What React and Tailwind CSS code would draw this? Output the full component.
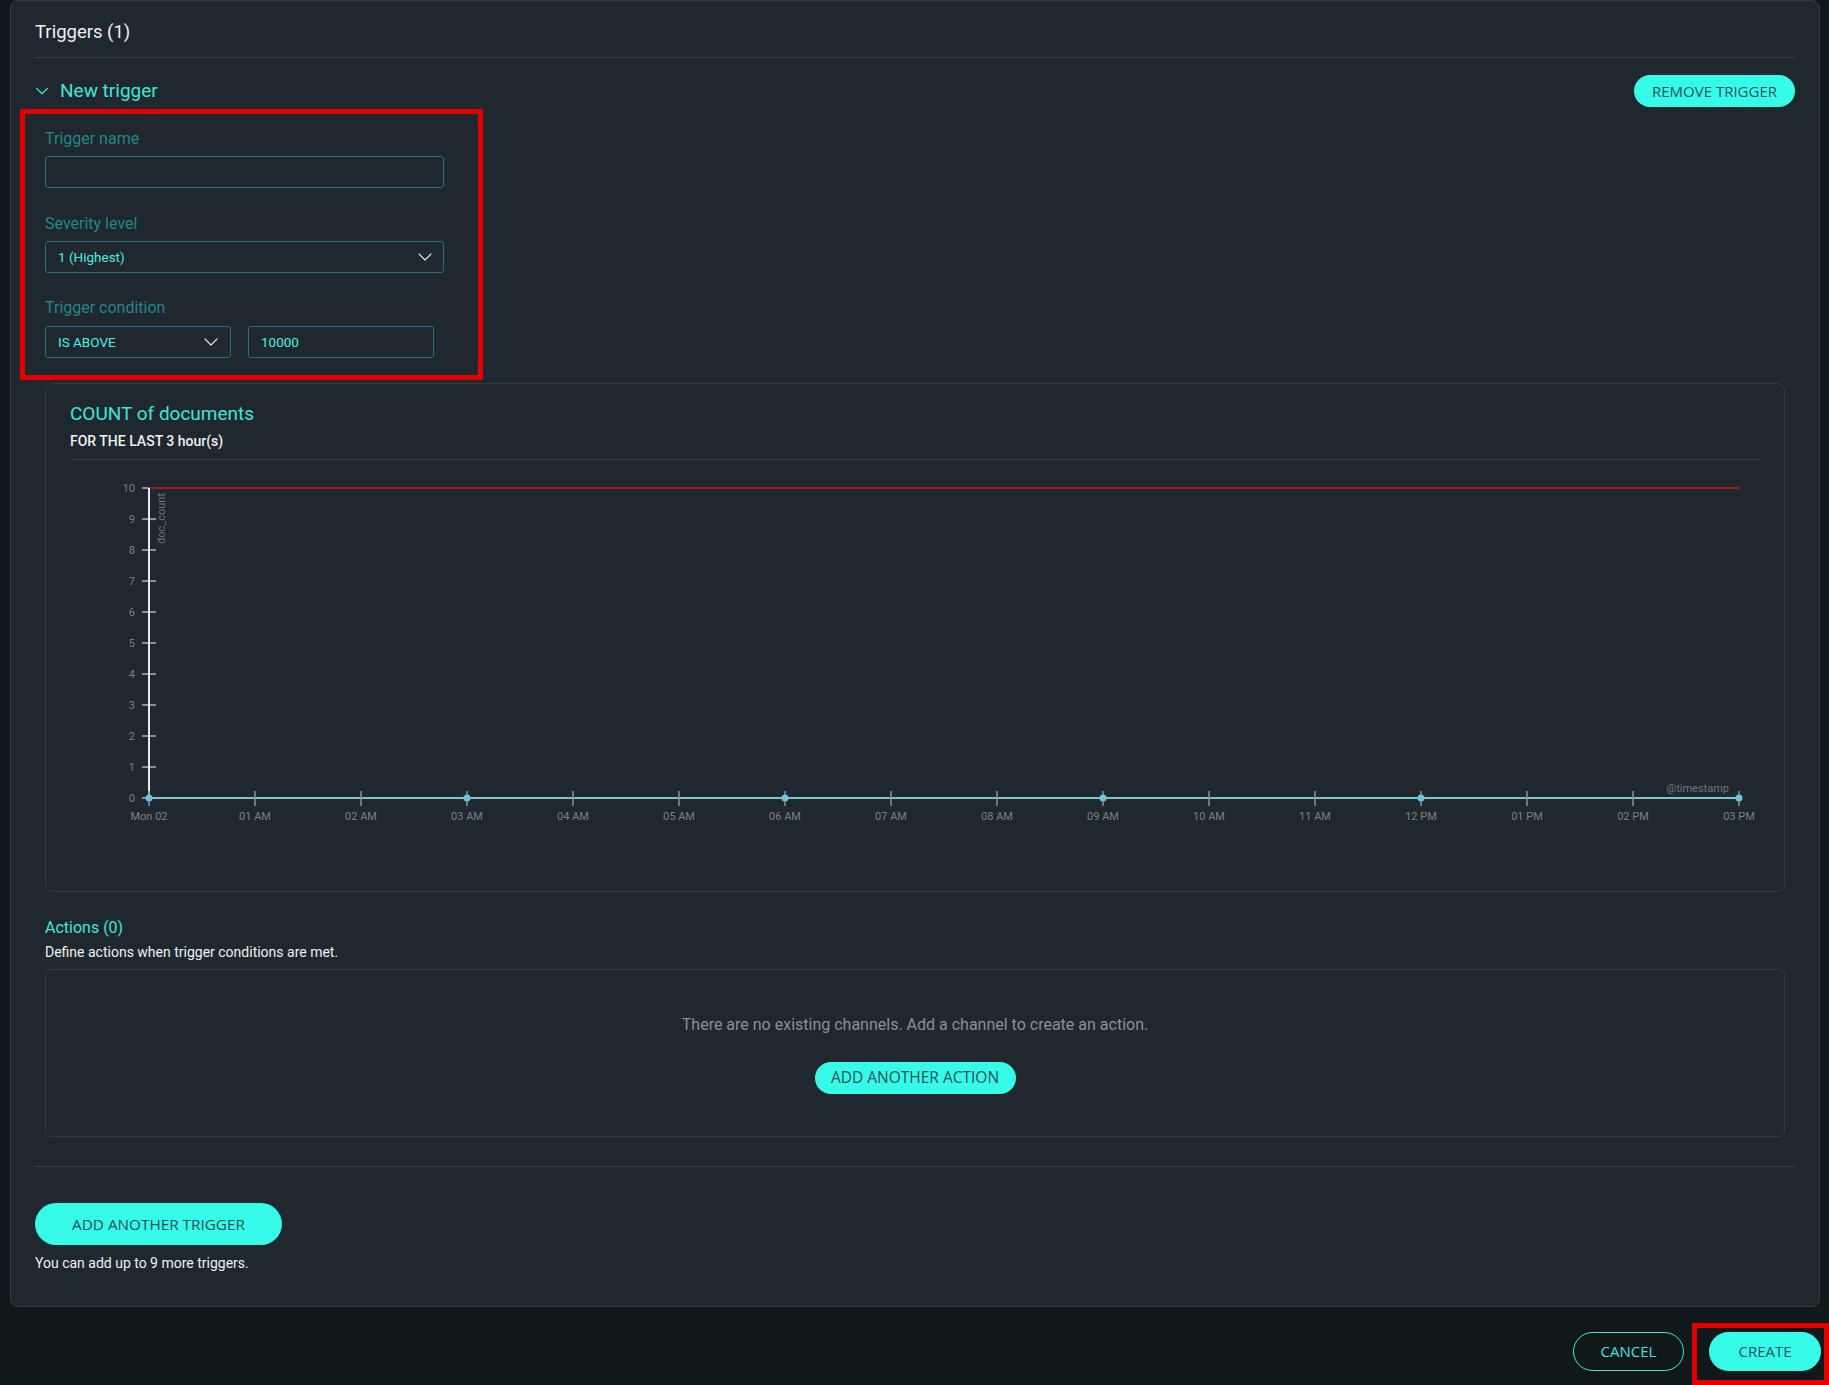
import React from 'react';
import { ChevronDown } from 'lucide-react';

const hourLabels = [
  'Mon 02', '01 AM', '02 AM', '03 AM', '04 AM', '05 AM', '06 AM', '07 AM',
  '08 AM', '09 AM', '10 AM', '11 AM', '12 PM', '01 PM', '02 PM', '03 PM',
];

// Empty doc_count chart with the threshold line at the top
const DocCountChart = () => {
  const axisX = 79;
  const step = 106;
  const yFor = (v) => 28 + (10 - v) * 31;
  const lastX = axisX + step * 15;

  return (
    <svg width="1690" height="431" className="block">
      {/* y ticks + labels */}
      {Array.from({ length: 11 }, (_, v) => (
        <g key={v}>
          <line x1="72" x2="86" y1={yFor(v)} y2={yFor(v)} stroke="#8b9096" strokeWidth="2" />
          <text x="65" y={yFor(v) + 4} textAnchor="end" fontSize="11" fill="#7b8187" fontFamily="Roboto, sans-serif">
            {v}
          </text>
        </g>
      ))}

      {/* threshold */}
      <line x1={axisX} x2={lastX} y1={yFor(10)} y2={yFor(10)} stroke="#9d1c1f" strokeWidth="2" />

      {/* y axis */}
      <line x1={axisX} x2={axisX} y1={yFor(10)} y2={yFor(0) + 1} stroke="#e8eaec" strokeWidth="2" />

      <text
        transform="translate(95,33) rotate(-90)"
        textAnchor="end"
        fontSize="11"
        fill="#6f757b"
        fontFamily="Roboto, sans-serif"
      >
        doc_count
      </text>

      {/* x axis */}
      <line x1={axisX} x2={lastX} y1={yFor(0)} y2={yFor(0)} stroke="#7ec6ca" strokeWidth="2" />

      {hourLabels.map((label, i) => {
        const x = axisX + i * step;
        return (
          <g key={label}>
            <line x1={x} x2={x} y1="331" y2="346" stroke="#8b9096" strokeWidth="1.5" />
            {i % 3 === 0 && <circle cx={x} cy={yFor(0)} r="3.5" fill="#6cc4de" />}
            <text x={x} y="360" textAnchor="middle" fontSize="11" fill="#7b8187" fontFamily="Roboto, sans-serif">
              {label}
            </text>
          </g>
        );
      })}

      <text x="1659" y="332" textAnchor="end" fontSize="11" fill="#6f757b" fontFamily="Roboto, sans-serif">
        @timestamp
      </text>
    </svg>
  );
};

const App = () => {
  return (
    <div className="min-h-screen w-full bg-[#11181a] font-[Roboto,sans-serif]">
      {/* Triggers panel */}
      <div className="ml-[10px] mr-[9px] rounded-lg border border-[#343a43] bg-[#1f282e] px-6 pt-[17px] pb-[34px]">
        <div className="text-[18.5px] leading-[28px] text-[#eef0f2]">Triggers (1)</div>
        <div className="mt-[11px] h-px bg-[#3a3c48]" />

        {/* New trigger header */}
        <div className="mt-[17px] flex h-[32px] items-center justify-between">
          <div className="-ml-[4px] flex items-center gap-[7px]">
            <ChevronDown size={22} strokeWidth={1.2} className="text-[#3ee6da]" />
            <span className="text-[19px] leading-[24px] text-[#3ee6da]">New trigger</span>
          </div>
          <button className="h-[32px] w-[161px] rounded-full bg-[#36fbe9] font-['Open_Sans',sans-serif] text-[15px] text-[#285058]">
            REMOVE TRIGGER
          </button>
        </div>

        <div className="px-[10px]">
          {/* Trigger form (highlighted) */}
          <div className="-ml-[25px] mt-[2px] w-[463px] border-[5px] border-[#e30000] pl-[20px] pt-[15px] pb-[17px]">
            <div className="text-[16px] leading-[20px] text-[#23868c]">Trigger name</div>
            <div className="mt-[7px] h-[32px] w-[399px] rounded-[3px] border border-[#1f7379]" />

            <div className="mt-[26px] text-[16px] leading-[20px] text-[#23868c]">Severity level</div>
            <div className="mt-[7px] flex h-[32px] w-[399px] items-center justify-between rounded-[3px] border border-[#1f7379] pl-[12px] pr-[6px]">
              <span className="text-[13.5px] text-[#46efe3]">1 (Highest)</span>
              <ChevronDown size={24} strokeWidth={1.1} className="text-[#e6e8ea]" />
            </div>

            <div className="mt-[25px] text-[16px] leading-[20px] text-[#23868c]">Trigger condition</div>
            <div className="mt-[8px] flex gap-[17px]">
              <div className="flex h-[32px] w-[186px] items-center justify-between rounded-[3px] border border-[#1f7379] pl-[12px] pr-[7px]">
                <span className="text-[13.5px] text-[#46efe3]">IS ABOVE</span>
                <ChevronDown size={24} strokeWidth={1.1} className="text-[#e6e8ea]" />
              </div>
              <div className="flex h-[32px] w-[186px] items-center rounded-[3px] border border-[#1f7379] pl-[12px]">
                <span className="text-[13.5px] text-[#46efe3]">10000</span>
              </div>
            </div>
          </div>

          {/* Chart card */}
          <div className="mt-[3px] rounded-lg border border-[#323941] px-6 pt-[20px]">
            <div className="text-[19px] leading-[20px] text-[#3ee6da]">COUNT of documents</div>
            <div className="mt-[8px] text-[14px] font-medium leading-[18px] text-[#eef0f2]">FOR THE LAST 3 hour(s)</div>
            <div className="mt-[9px] h-px bg-[#353b44]" />
            <DocCountChart />
          </div>

          {/* Actions */}
          <div className="mt-[26px] text-[16px] leading-[20px] text-[#3ee6da]">Actions (0)</div>
          <div className="mt-[5px] text-[14px] leading-[18px] text-[#eef0f2]">Define actions when trigger conditions are met.</div>
          <div className="mt-[8px] flex flex-col items-center rounded-md border border-[#323941] pt-[45px] pb-[42px]">
            <div className="text-[16px] leading-[20px] text-[#8a9096]">
              There are no existing channels. Add a channel to create an action.
            </div>
            <button className="mt-[27px] h-[32px] w-[201px] rounded-full bg-[#36fbe9] font-['Open_Sans',sans-serif] text-[15.5px] text-[#285058]">
              ADD ANOTHER ACTION
            </button>
          </div>
        </div>

        <div className="mt-[29px] h-px bg-[#3a3c48]" />

        <button className="mt-[36px] h-[42px] w-[247px] rounded-full bg-[#36fbe9] font-['Open_Sans',sans-serif] text-[15.3px] text-[#285058]">
          ADD ANOTHER TRIGGER
        </button>
        <div className="mt-[9px] text-[14px] leading-[18px] text-[#eef0f2]">You can add up to 9 more triggers.</div>
      </div>

      {/* Footer */}
      <div className="mt-[16px] flex items-start justify-end">
        <button className="mt-[9px] h-[39px] w-[111px] rounded-full border border-[#3ee6da] font-['Open_Sans',sans-serif] text-[15px] text-[#3ee6da]">
          CANCEL
        </button>
        <div className="ml-[8px] border-[5px] border-[#e30000] pl-[12px] pr-[3px] pt-[4px] pb-[9px]">
          <button className="block h-[39px] w-[112px] rounded-full bg-[#36fbe9] font-['Open_Sans',sans-serif] text-[15px] text-[#285058]">
            CREATE
          </button>
        </div>
      </div>
    </div>
  );
};

export default App;
